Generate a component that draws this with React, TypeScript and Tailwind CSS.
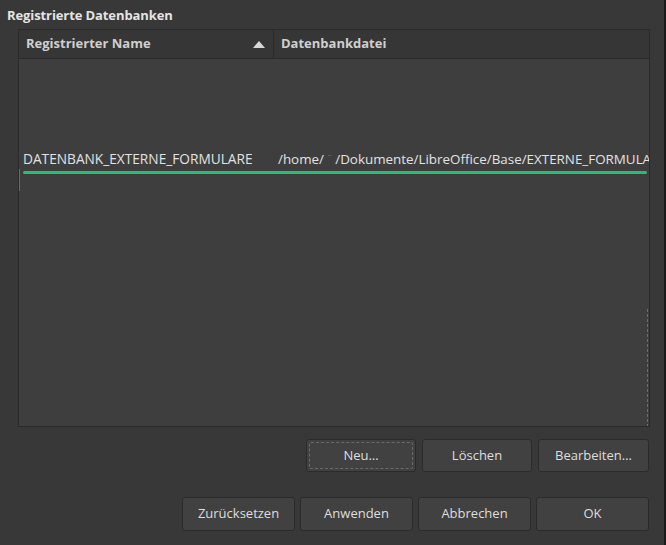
import React from "react";

const font = { fontFamily: '"Open Sans", "Noto Sans", sans-serif' };

function Btn({ label, focus, w }: { label: string; focus?: boolean; w: string }) {
  return (
    <button
      className={`${w} h-full rounded-[3px] border border-[#2b2b2b] bg-[#414141] text-[13px] text-[#dedede] flex items-center justify-center`}
    >
      <span
        className={
          focus
            ? "flex items-center justify-center w-[calc(100%-4px)] h-[calc(100%-4px)] border border-dashed border-[#6a6a6a] rounded-[2px]"
            : ""
        }
      >
        {label}
      </span>
    </button>
  );
}

export default function App() {
  return (
    <div
      className="w-[666px] h-[545px] bg-[#383838] border-r-2 border-[#1a1a1a] flex flex-col text-[#dedede]"
      style={font}
    >
      <div className="h-[29px] pl-[7px] pt-[5px] text-[13px] font-bold text-[#e4e4e4] leading-[20px] tracking-[-0.1px]">
        Registrierte Datenbanken
      </div>

      <div className="ml-[18px] w-[632px] h-[398px] flex flex-col border border-[#2a2a2a] bg-[#3e3e3e]">
        <div className="h-[29px] flex bg-[#363636] border-b border-[#2a2a2a] text-[13px] font-bold text-[#cfcfcf]">
          <div className="w-[255px] flex items-center justify-between pl-[7px] pr-[8px] border-r border-[#2a2a2a]">
            <span>Registrierter Name</span>
            <svg width="12" height="7" viewBox="0 0 12 7">
              <path d="M0 7 L6 0 L12 7 Z" fill="#d8d8d8" />
            </svg>
          </div>
          <div className="flex-1 flex items-center pl-[7px]">Datenbankdatei</div>
        </div>

        <div className="flex-1 relative overflow-hidden">
          <div className="mt-[90px] flex items-center h-[20px] text-[13.7px] text-[#e2e2e2] whitespace-nowrap">
            <span className="shrink-0 pl-[4px] w-[259px]">DATENBANK_EXTERNE_FORMULARE</span>
            <span className="shrink-0 flex items-center text-[13.4px]">
              /home/
              <span className="mx-[3px] text-[#9a9a9a] text-[9px]">¨</span>
              /Dokumente/LibreOffice/Base/EXTERNE_FORMULARE
            </span>
          </div>
          <div className="ml-[4px] mt-[2px] w-[624px] h-[3px] rounded-full bg-[#2fb878]" />
          <div className="absolute left-[0px] top-[110px] w-px h-[22px] bg-[#6a6a6a]" />
          <div className="absolute right-[1px] top-[250px] w-px h-[118px] border-r border-dashed border-[#6e6e6e]" />
        </div>
      </div>

      <div className="mt-[12px] h-[33px] flex justify-end gap-[6px] pr-[15px]">
        <Btn label="Neu…" focus w="w-[110px]" />
        <Btn label="Löschen" w="w-[110px]" />
        <Btn label="Bearbeiten…" w="w-[111px]" />
      </div>

      <div className="mt-[25px] h-[34px] flex justify-end gap-[5px] pr-[15px]">
        <Btn label="Zurücksetzen" w="w-[113px]" />
        <Btn label="Anwenden" w="w-[113px]" />
        <Btn label="Abbrechen" w="w-[113px]" />
        <Btn label="OK" w="w-[113px]" />
      </div>
    </div>
  );
}
